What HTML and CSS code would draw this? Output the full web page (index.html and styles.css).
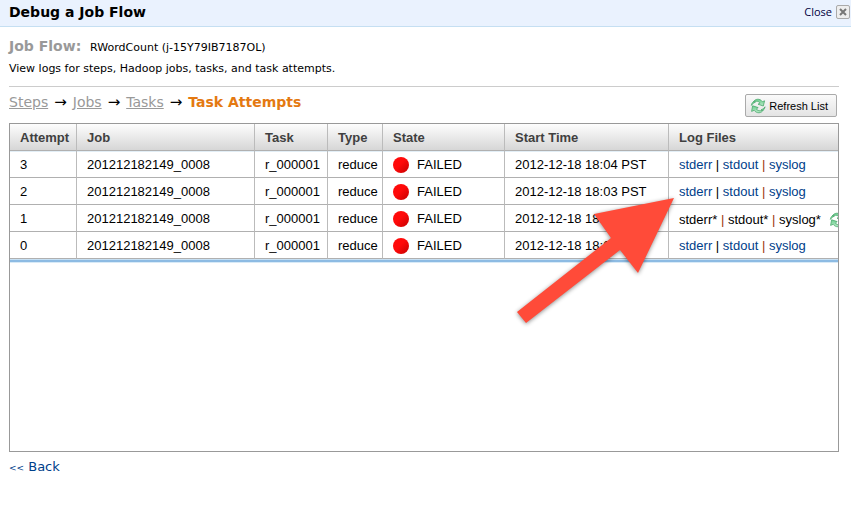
FILE: index.html
```html
<!DOCTYPE html>
<html lang="en">
<head>
<meta charset="utf-8">
<title>Debug a Job Flow</title>
<link rel="stylesheet" href="styles.css">
</head>
<body>
<svg class="defs" aria-hidden="true">
  <defs>
    <linearGradient id="leaf" x1="0" y1="0" x2="0" y2="1">
      <stop offset="0" stop-color="#6fcf90"/>
      <stop offset="1" stop-color="#b5e8c5"/>
    </linearGradient>
    <symbol id="refresh" viewBox="0 0 16 16">
      <g fill="url(#leaf)" stroke="#4aa86c" stroke-width=".8" stroke-linejoin="round">
        <path d="M3 4.500C5 .4 10 .2 12.400 3.700L14.600 2.800L13.300 8L8 6.200L10.100 5C8.500 2.900 5.600 2.600 3 4.500Z"/>
        <path d="M13.600 11.500C11.600 15.600 6.600 15.800 4.200 12.300L1.600 13.400L2.600 7.800L8.200 9.600L6.300 11C7.900 13 11 13.400 13.600 11.500Z"/>
        <path d="M1.400 7.400C1.600 5.600 2.200 4.800 3.400 3.800L5.400 4.200C3.800 4.800 2.400 5.800 1.400 7.400Z"/>
        <path d="M15 8.800C14.800 10.400 14.200 11.300 13 12.300L11 11.900C12.600 11.300 14 10.400 15 8.800Z"/>
      </g>
    </symbol>
  </defs>
</svg>
<header class="titlebar">
  <h1>Debug a Job Flow</h1>
  <button class="close" type="button">Close
    <span class="close-box"><svg viewBox="0 0 8 8" aria-hidden="true"><path d="M1 1L7 7M7 1L1 7"/></svg></span>
  </button>
</header>
<main>
  <section class="intro">
    <h2>Job Flow: <span>RWordCount (j-15Y79IB7187OL)</span></h2>
    <p>View logs for steps, Hadoop jobs, tasks, and task attempts.</p>
  </section>
  <div class="toolbar">
    <nav class="crumbs" aria-label="Breadcrumb">
      <a href="#steps">Steps</a><span>→</span><a href="#jobs">Jobs</a><span>→</span><a href="#tasks">Tasks</a><span>→</span><strong>Task Attempts</strong>
    </nav>
    <button class="refresh" type="button"><svg class="icon" aria-hidden="true"><use href="#refresh"/></svg>Refresh List</button>
  </div>
  <div class="grid">
    <table>
      <colgroup>
        <col class="c-attempt"><col class="c-job"><col class="c-task"><col class="c-type"><col class="c-state"><col class="c-start"><col>
      </colgroup>
      <thead>
        <tr><th>Attempt</th><th>Job</th><th>Task</th><th>Type</th><th>State</th><th>Start Time</th><th>Log Files</th></tr>
      </thead>
      <tbody>
        <tr><td>3</td><td>201212182149_0008</td><td>r_000001</td><td>reduce</td><td><span class="state">FAILED</span></td><td>2012-12-18 18:04 PST</td><td><a href="#e3">stderr</a> | <a href="#o3">stdout</a> <i>|</i> <a href="#s3">syslog</a></td></tr>
        <tr><td>2</td><td>201212182149_0008</td><td>r_000001</td><td>reduce</td><td><span class="state">FAILED</span></td><td>2012-12-18 18:03 PST</td><td><a href="#e2">stderr</a> | <a href="#o2">stdout</a> <i>|</i> <a href="#s2">syslog</a></td></tr>
        <tr><td>1</td><td>201212182149_0008</td><td>r_000001</td><td>reduce</td><td><span class="state">FAILED</span></td><td>2012-12-18 18:02 PST</td><td class="pending">stderr* <i>|</i> stdout* <i>|</i> syslog*<svg class="icon" aria-hidden="true"><use href="#refresh"/></svg></td></tr>
        <tr><td>0</td><td>201212182149_0008</td><td>r_000001</td><td>reduce</td><td><span class="state">FAILED</span></td><td>2012-12-18 18:01 PST</td><td><a href="#e0">stderr</a> | <a href="#o0">stdout</a> <i>|</i> <a href="#s0">syslog</a></td></tr>
      </tbody>
    </table>
    <div class="table-end"></div>
    <svg class="pointer" viewBox="0 0 170 140" aria-hidden="true"><path d="M164 8L84 24L101 48L7 122L16 133L110 60L128 83Z"/></svg>
  </div>
  <a class="back" href="#back"><span>&lt;&lt;</span> Back</a>
</main>
</body>
</html>
```
FILE: styles.css
```css
* { box-sizing: border-box; }
body {
  margin: 0;
  background: #fff;
  color: #000;
  font: 11px/16px Verdana, "DejaVu Sans", sans-serif;
}
h1, h2, p { margin: 0; }
a { color: #00408a; text-decoration: none; }
button { font: inherit; color: inherit; cursor: pointer; }
.defs { position: absolute; width: 0; height: 0; }
.icon { width: 16px; height: 16px; flex: none; }

.titlebar {
  display: flex;
  justify-content: space-between;
  align-items: center;
  height: 27px;
  padding: 0 1px 3px 9px;
  background: #eaf2fe;
  border-bottom: 1px solid #c5dff2;
}
.titlebar h1 { font-size: 14px; line-height: 20px; }
.close {
  display: flex;
  align-items: center;
  gap: 4px;
  padding: 0;
  border: 0;
  background: none;
  color: #000040;
  font-family: "Lucida Grande", "Open Sans", sans-serif;
}
.close-box {
  display: flex;
  align-items: center;
  justify-content: center;
  width: 14px;
  height: 14px;
  border: 1px solid #aaa;
  border-radius: 2px;
  background: #eee;
}
.close-box svg { width: 8px; height: 8px; stroke: #777; stroke-width: 2; }

main { padding: 9px 12px 0 9px; }
.intro { padding-bottom: 9px; border-bottom: 1px solid #ccc; }
.intro h2 { font-size: 14px; line-height: 20px; color: #999; }
.intro h2 span { margin-left: 4px; font-size: 11px; font-weight: normal; color: #000; }
.intro p { margin-top: 3px; }

.toolbar { display: flex; justify-content: space-between; padding: 7px 2px 6px 0; }
.crumbs { font-size: 14px; line-height: 16px; }
.crumbs span { margin: 0 6px; font-size: 15px; }
.crumbs a { color: #999; text-decoration: underline; }
.crumbs strong { color: #e47911; }
.refresh {
  display: flex;
  align-items: center;
  gap: 3px;
  height: 23px;
  padding: 0 8px 0 4px;
  border: 1px solid #aaa;
  border-radius: 2px;
  background: linear-gradient(#fafafa, #e4e4e4);
  font-family: "Liberation Sans", Arial, sans-serif;
}

.grid {
  position: relative;
  height: 329px;
  overflow: hidden;
  border: 1px solid #999;
}
table {
  width: 100%;
  table-layout: fixed;
  border-collapse: separate;
  border-spacing: 0;
  font: 13px/16px "Liberation Sans", Arial, sans-serif;
}
.c-attempt { width: 67px; }
.c-job { width: 178px; }
.c-task { width: 73px; }
.c-type { width: 55px; }
.c-state { width: 122px; }
.c-start { width: 164px; }
th, td {
  height: 27px;
  padding: 2px 0 0 10px;
  overflow: hidden;
  border-right: 1px solid #bbb;
  border-bottom: 1px solid #b0b0b0;
  text-align: left;
  white-space: nowrap;
}
th:last-child, td:last-child { border-right: 0; }
th {
  color: #404040;
  background: linear-gradient(#fdfdfd, #d6d6d6);
}
tbody tr:first-child td { box-shadow: inset 0 1px #e2eef6; }
td i { color: #a03010; font-style: normal; }
.state { display: flex; align-items: center; gap: 8px; }
.state::before {
  content: "";
  width: 16px;
  height: 16px;
  border-radius: 50%;
  background: linear-gradient(135deg, #ff0a0a 45%, #c40000);
}
.pending { padding-top: 4px; }
.pending .icon { margin-left: 8px; vertical-align: middle; }
.table-end {
  height: 4px;
  background: #8dbbe3;
  border-top: 1px solid #c6e0f4;
  border-bottom: 1px solid #d8eaf7;
}
.pointer {
  position: absolute;
  top: 66px;
  left: 500px;
  width: 170px;
  height: 140px;
  fill: #ff4b39;
  filter: drop-shadow(0 1px 2px rgba(0, 0, 0, .45));
}
.back { display: inline-block; margin-top: 7px; font-size: 13px; }
.back span { font-size: 9px; }
```
